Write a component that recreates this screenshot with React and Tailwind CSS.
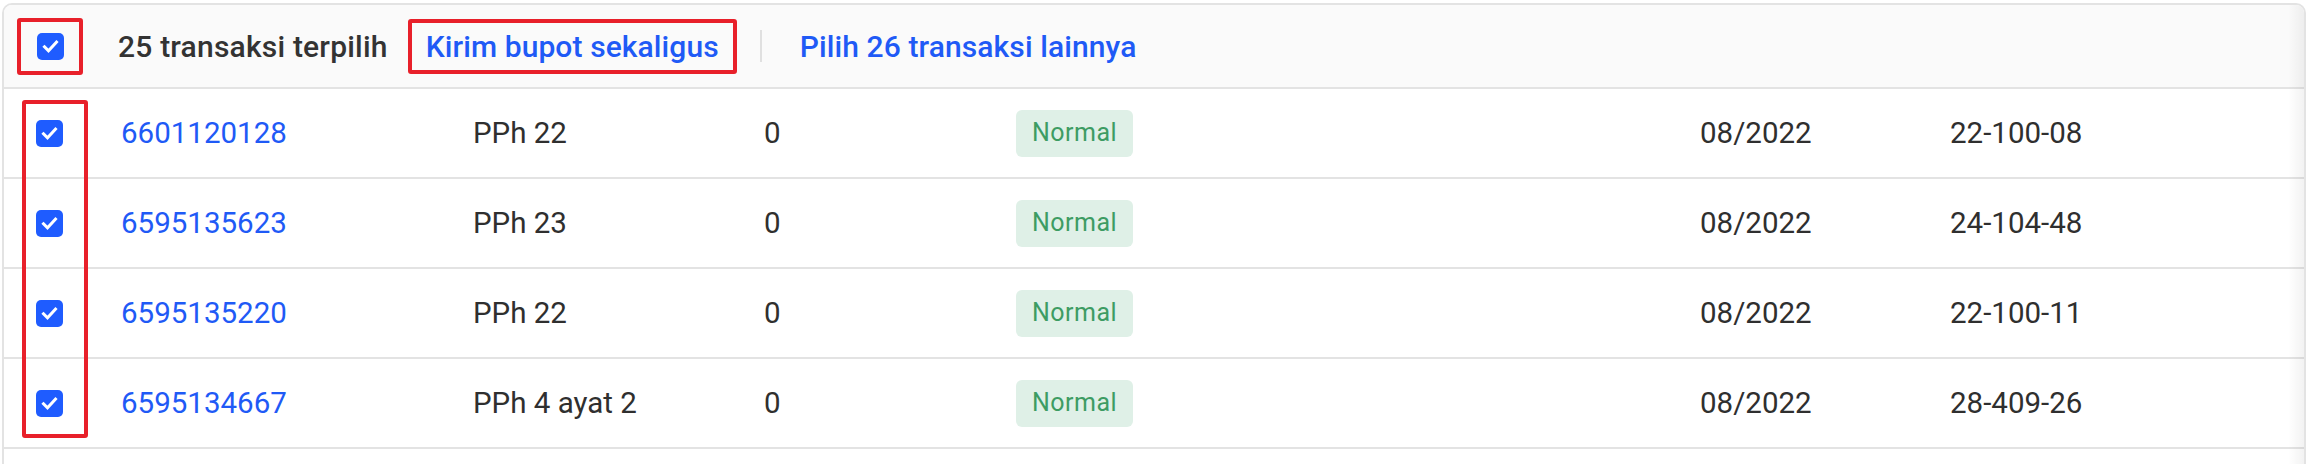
import React from 'react';

const rows = [
  { id: '6601120128', type: 'PPh 22', amount: '0', status: 'Normal', period: '08/2022', code: '22-100-08' },
  { id: '6595135623', type: 'PPh 23', amount: '0', status: 'Normal', period: '08/2022', code: '24-104-48' },
  { id: '6595135220', type: 'PPh 22', amount: '0', status: 'Normal', period: '08/2022', code: '22-100-11' },
  { id: '6595134667', type: 'PPh 4 ayat 2', amount: '0', status: 'Normal', period: '08/2022', code: '28-409-26' },
];

const CheckBox = () => (
  <span className="inline-flex size-[27px] items-center justify-center rounded-[5px] bg-[#1f5cff]">
    <svg viewBox="0 0 27 27" className="size-[27px]" fill="none">
      <path d="M7.5 13.8l4 4 8-8.6" stroke="#fff" strokeWidth="3" strokeLinecap="square" strokeLinejoin="miter" />
    </svg>
  </span>
);

export default function App() {
  return (
    <div className="w-[2316px] h-[464px] overflow-hidden bg-white pt-[3px] pl-[2px]" style={{ fontFamily: 'Roboto, "Liberation Sans", sans-serif' }}>
      <div className="relative w-[2304px] h-[470px] rounded-t-[10px] border-2 border-[#e3e3e3] overflow-hidden">
        {/* header */}
        <div className="flex h-[84px] items-center border-b-2 border-[#e3e3e3] bg-[#fafafa]">
          <div className="ml-[13px] flex h-[57px] w-[66px] items-center justify-center rounded-[3px] border-4 border-[#e8202a]">
            <CheckBox />
          </div>
          <span className="ml-[35px] text-[30px] font-medium tracking-[0.2px] text-[#333]">25 transaksi terpilih</span>
          <div className="ml-[20px] flex h-[55px] items-center rounded-[3px] border-4 border-[#e8202a] px-[14px]">
            <span className="text-[30px] font-medium tracking-[0.1px] text-[#1f5af6]">Kirim bupot sekaligus</span>
          </div>
          <span className="ml-[23px] h-[32px] w-[2px] bg-[#e0e0e0]" />
          <span className="ml-[38px] text-[30px] font-medium tracking-[0.1px] text-[#1f5af6]">Pilih 26 transaksi lainnya</span>
        </div>

        {/* rows */}
        {rows.map((r) => (
          <div key={r.id} className="grid h-[90px] grid-cols-[117px_352px_291px_252px_684px_250px_1fr] items-center border-b-2 border-[#e3e3e3] text-[29.5px] text-[#2f2f2f]">
            <div className="pl-[32px] flex items-center"><CheckBox /></div>
            <div className="text-[#1f5af6]">{r.id}</div>
            <div>{r.type}</div>
            <div>{r.amount}</div>
            <div>
              <span className="inline-flex h-[47px] w-[117px] items-center justify-center rounded-[6px] bg-[#dff0e7] text-[25px] tracking-[0.5px] text-[#3d9c63]">
                {r.status}
              </span>
            </div>
            <div>{r.period}</div>
            <div>{r.code}</div>
          </div>
        ))}

        {/* annotation around row checkboxes */}
        <div className="absolute left-[18px] top-[95px] h-[338px] w-[66px] rounded-[3px] border-4 border-[#e8202a] pointer-events-none" />
        {/* right scroll shadow */}
        <div className="absolute right-0 top-0 h-full w-[16px] bg-gradient-to-r from-transparent to-black/[0.05] pointer-events-none" />
      </div>
    </div>
  );
}
